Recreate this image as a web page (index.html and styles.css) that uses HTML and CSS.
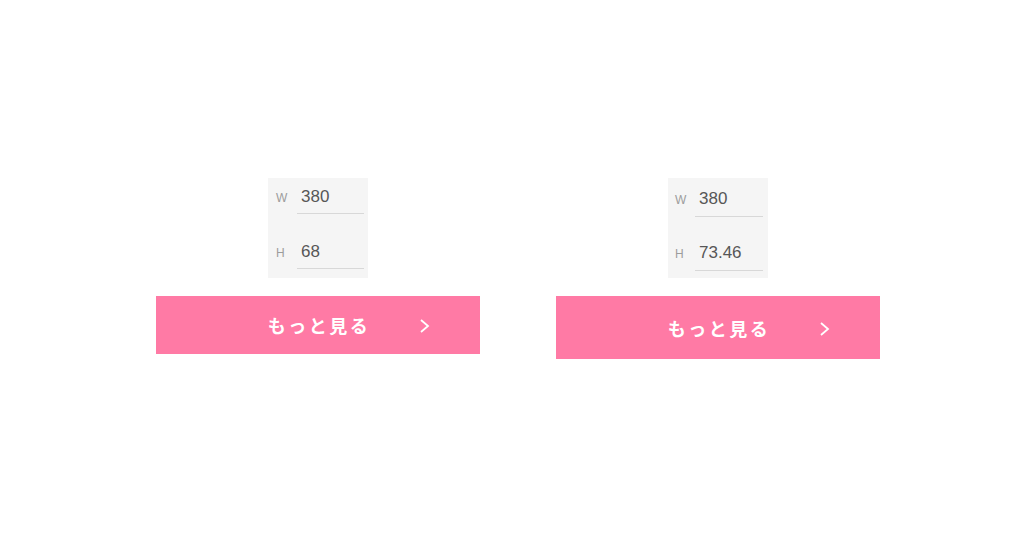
FILE: index.html
```html
<!DOCTYPE html>
<html lang="ja">
<head>
    <meta charset="UTF-8">
    <meta name="viewport" content="width=device-width, initial-scale=1.0">
    <title>もっと見る ボタン比較</title>
    <link rel="stylesheet" href="styles.css">
</head>
<body>
    <div class="stage">
        <div class="sample">
            <div class="props">
                <div class="prop-row"><span class="prop-label">W</span><span class="prop-value">380</span></div>
                <div class="prop-row"><span class="prop-label">H</span><span class="prop-value">68</span></div>
            </div>
            <a class="more-btn" href="#">もっと見る
                <svg class="chevron" width="12" height="14" viewBox="0 0 12 14"><polyline points="2,1 9,7 2,13" fill="none" stroke="#fff" stroke-width="1.8"/></svg>
            </a>
        </div>

        <div class="sample">
            <div class="props props-alt">
                <div class="prop-row"><span class="prop-label">W</span><span class="prop-value">380</span></div>
                <div class="prop-row"><span class="prop-label">H</span><span class="prop-value">73.46</span></div>
            </div>
            <a class="more-btn more-btn-tall" href="#">もっと見る
                <svg class="chevron" width="12" height="14" viewBox="0 0 12 14"><polyline points="2,1 9,7 2,13" fill="none" stroke="#fff" stroke-width="1.8"/></svg>
            </a>
        </div>
    </div>
</body>
</html>
```

FILE: styles.css
```css
body {
    margin: 0;
    background-color: #fff;
    font-family: "Liberation Sans", Arial, sans-serif;
}
.stage {
    display: flex;
    gap: 76px;
    padding: 178px 0 0 156px;
}
.sample {
    width: 324px;
    display: flex;
    flex-direction: column;
    align-items: center;
    gap: 18px;
}
.props {
    width: 100px;
    height: 100px;
    box-sizing: border-box;
    background-color: #f5f5f5;
    padding: 9px 4px 0 8px;
    display: flex;
    flex-direction: column;
    gap: 28px;
}
.props-alt {
    padding-top: 11px;
    padding-left: 7px;
    padding-right: 5px;
    gap: 26px;
}
.prop-row {
    display: flex;
    align-items: baseline;
}
.prop-label {
    width: 21px;
    font-size: 12px;
    color: #9c9c9c;
}
.props-alt .prop-label {
    width: 20px;
}
.prop-value {
    flex: 1;
    font-size: 17px;
    line-height: 20px;
    color: #575757;
    padding: 0 0 6px 4px;
    border-bottom: 1px solid #d8d8d8;
}
.props-alt .prop-value {
    padding-bottom: 7px;
}
.more-btn {
    position: relative;
    width: 324px;
    height: 58px;
    display: flex;
    align-items: center;
    justify-content: center;
    background-color: #ff7aa5;
    color: #fff;
    text-decoration: none;
    font-family: "Noto Sans CJK JP", sans-serif;
    font-weight: 700;
    font-size: 18px;
    letter-spacing: 2.5px;
    padding-left: 2px;
    box-sizing: border-box;
}
.more-btn-tall {
    height: 63px;
}
.chevron {
    position: absolute;
    right: 49px;
    top: 50%;
    margin-top: -6px;
}
```
